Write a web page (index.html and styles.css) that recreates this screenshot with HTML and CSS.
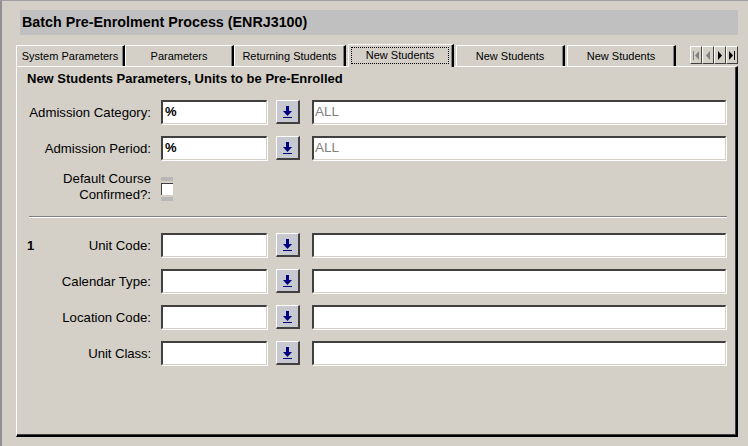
FILE: index.html
```html
<!DOCTYPE html>
<html>
<head>
<meta charset="utf-8">
<link rel="stylesheet" href="styles.css">
</head>
<body>
<div class="window">
  <div class="titlebar">Batch Pre-Enrolment Process (ENRJ3100)</div>
  <div class="tabs">
    <div class="tab w108">System Parameters</div>
    <div class="tab w109">Parameters</div>
    <div class="tab w111">Returning Students</div>
    <div class="tab active"><span class="focus">New Students</span></div>
    <div class="tab w108 ml">New Students</div>
    <div class="tab w109 ml">New Students</div>
    <div class="nav">
      <div class="navbtn"><svg width="8" height="9" viewBox="0 0 8 9"><rect x="1" y="0" width="1" height="9" fill="#808080"/><path d="M7 0 L3 4.5 L7 9 Z" fill="#808080"/></svg></div>
      <div class="navbtn"><svg width="8" height="9" viewBox="0 0 8 9"><path d="M6 0 L2 4.5 L6 9 Z" fill="#808080"/></svg></div>
      <div class="navbtn"><svg width="8" height="9" viewBox="0 0 8 9"><path d="M2 0 L6 4.5 L2 9 Z" fill="#000"/></svg></div>
      <div class="navbtn"><svg width="8" height="9" viewBox="0 0 8 9"><path d="M1 0 L5 4.5 L1 9 Z" fill="#000"/><rect x="6" y="0" width="1" height="9" fill="#000"/></svg></div>
    </div>
  </div>
  <div class="panel">
    <div class="heading">New Students Parameters, Units to be Pre-Enrolled</div>
    <div class="rows top">
      <div class="row">
        <div class="num"></div>
        <div class="label">Admission Category:</div>
        <div class="input code">%</div>
        <div class="lov"><svg width="11" height="14" viewBox="0 0 11 14"><rect x="4" y="1" width="3" height="5" fill="#000080"/><path d="M1 6 L10 6 L5.5 11 Z" fill="#000080"/><rect x="1" y="12" width="9" height="1" fill="#000080"/></svg></div>
        <div class="input desc">ALL</div>
      </div>
      <div class="row">
        <div class="num"></div>
        <div class="label">Admission Period:</div>
        <div class="input code">%</div>
        <div class="lov"><svg width="11" height="14" viewBox="0 0 11 14"><rect x="4" y="1" width="3" height="5" fill="#000080"/><path d="M1 6 L10 6 L5.5 11 Z" fill="#000080"/><rect x="1" y="12" width="9" height="1" fill="#000080"/></svg></div>
        <div class="input desc">ALL</div>
      </div>
      <div class="row chkrow">
        <div class="num"></div>
        <div class="label two">Default Course<br>Confirmed?:</div>
        <div class="chkwrap"><div class="bar"></div><div class="chk"></div><div class="bar"></div></div>
      </div>
    </div>
    <div class="divider"></div>
    <div class="rows">
      <div class="row">
        <div class="num">1</div>
        <div class="label">Unit Code:</div>
        <div class="input code"></div>
        <div class="lov"><svg width="11" height="14" viewBox="0 0 11 14"><rect x="4" y="1" width="3" height="5" fill="#000080"/><path d="M1 6 L10 6 L5.5 11 Z" fill="#000080"/><rect x="1" y="12" width="9" height="1" fill="#000080"/></svg></div>
        <div class="input desc"></div>
      </div>
      <div class="row">
        <div class="num"></div>
        <div class="label">Calendar Type:</div>
        <div class="input code"></div>
        <div class="lov"><svg width="11" height="14" viewBox="0 0 11 14"><rect x="4" y="1" width="3" height="5" fill="#000080"/><path d="M1 6 L10 6 L5.5 11 Z" fill="#000080"/><rect x="1" y="12" width="9" height="1" fill="#000080"/></svg></div>
        <div class="input desc"></div>
      </div>
      <div class="row">
        <div class="num"></div>
        <div class="label">Location Code:</div>
        <div class="input code"></div>
        <div class="lov"><svg width="11" height="14" viewBox="0 0 11 14"><rect x="4" y="1" width="3" height="5" fill="#000080"/><path d="M1 6 L10 6 L5.5 11 Z" fill="#000080"/><rect x="1" y="12" width="9" height="1" fill="#000080"/></svg></div>
        <div class="input desc"></div>
      </div>
      <div class="row">
        <div class="num"></div>
        <div class="label narrow">Unit Class:</div>
        <div class="input code"></div>
        <div class="lov"><svg width="11" height="14" viewBox="0 0 11 14"><rect x="4" y="1" width="3" height="5" fill="#000080"/><path d="M1 6 L10 6 L5.5 11 Z" fill="#000080"/><rect x="1" y="12" width="9" height="1" fill="#000080"/></svg></div>
        <div class="input desc"></div>
      </div>
    </div>
  </div>
</div>
</body>
</html>
```

FILE: styles.css
```css
html, body {
  margin: 0;
  padding: 0;
  background: #d4d0c8;
  font-family: "Liberation Sans", Arial, sans-serif;
  color: #000;
}
.window {
  width: 746px;
  height: 445px;
  border-top: 1px solid #a0a0a0;
  border-left: 2px solid #909090;
  box-sizing: content-box;
  position: relative;
}
.titlebar {
  margin: 9px 0 0 18px;
  width: 718px;
  height: 25px;
  background: #c0c0c0;
  font-weight: bold;
  font-size: 14.3px;
  line-height: 25px;
  padding-left: 2px;
  box-sizing: border-box;
}
.tabs {
  display: flex;
  align-items: flex-end;
  margin: 8px 0 0 14px;
  height: 23px;
}
.tab {
  height: 21px;
  box-sizing: border-box;
  border-top: 1px solid #ffffff;
  border-left: 1px solid #ffffff;
  border-right: 2px solid #000;
  box-shadow: inset -1px 0 0 #808080;
  font-size: 11px;
  line-height: 20px;
  text-align: center;
  white-space: nowrap;
  background: #d4d0c8;
}
.w108 { width: 109px; }
.w109 { width: 109px; }
.w111 { width: 112px; }
.ml { margin-left: 2px; }
.tab.active {
  width: 106px;
  height: 23px;
  margin-left: 2px;
  margin-bottom: -1px;
  position: relative;
  z-index: 2;
  padding: 2px 3px 0 2px;
  line-height: 16px;
}
.focus {
  display: block;
  border: 1px dotted #000;
  height: 15px;
  line-height: 15px;
}
.nav {
  display: flex;
  margin-left: 14px;
  margin-bottom: 2px;
}
.navbtn {
  width: 12px;
  height: 18px;
  box-sizing: border-box;
  border-top: 1px solid #fff;
  border-left: 1px solid #fff;
  border-right: 1px solid #404040;
  border-bottom: 1px solid #404040;
  display: flex;
  align-items: center;
  justify-content: center;
  background: #d4d0c8;
}
.panel {
  margin-left: 14px;
  width: 722px;
  height: 371px;
  box-sizing: border-box;
  border-left: 1px solid #ffffff;
  border-top: 1px solid #ffffff;
  border-right: 2px solid #000;
  border-bottom: 2px solid #000;
  box-shadow: inset -1px -1px 0 #404040;
  padding: 2px 0 0 10px;
}
.heading {
  font-weight: bold;
  font-size: 13px;
  line-height: 16px;
  margin-top: 2px;
}
.rows {
  display: flex;
  flex-direction: column;
  gap: 12px;
}
.rows.top {
  margin-top: 13px;
}
.row {
  display: grid;
  grid-template-columns: 20px 104px 116px 33px 426px;
  height: 24px;
  align-items: center;
}
.num {
  font-weight: bold;
  font-size: 13px;
}
.label {
  font-size: 13.2px;
  text-align: right;
  white-space: nowrap;
  justify-self: end;
}
.label.narrow {
  letter-spacing: -0.1px;
}
.label.two {
  line-height: 16px;
}
.input {
  height: 24px;
  box-sizing: border-box;
  background: #fff;
  border-top: 2px solid #404040;
  border-left: 2px solid #404040;
  border-right: 1px solid #d4d0c8;
  border-bottom: 1px solid #d4d0c8;
  box-shadow: inset -1px -1px 0 #ffffff, 1px 1px 0 #ffffff;
  font-size: 13px;
  line-height: 19px;
  padding-left: 2px;
}
.input.code {
  margin-left: 10px;
  width: 106px;
  font-weight: bold;
}
.lov {
  margin-left: 9px;
  width: 24px;
  height: 24px;
  box-sizing: border-box;
  background: #c8c8d0;
  border-top: 1px solid #ffffff;
  border-left: 1px solid #ffffff;
  border-right: 2px solid #404040;
  border-bottom: 2px solid #404040;
  display: flex;
  align-items: center;
  justify-content: center;
  padding-top: 1px;
}
.input.desc {
  margin-left: 12px;
  width: 414px;
  color: #808080;
  font-size: 13.5px;
  padding-left: 1px;
}
.chkrow {
  height: 36px;
  margin-top: -3px;
}
.chkwrap {
  margin-left: 10px;
  width: 12px;
  display: flex;
  flex-direction: column;
  gap: 2px;
  margin-top: 3px;
}
.bar {
  width: 12px;
  height: 4px;
  background: #b8b8b8;
}
.chk {
  width: 12px;
  height: 12px;
  box-sizing: border-box;
  background: #fff;
  border-top: 1px solid #404040;
  border-left: 1px solid #404040;
}
.divider {
  margin: 11px 0 15px 2px;
  width: 698px;
  height: 1px;
  background: #808080;
  border-bottom: 1px solid #ffffff;
}
```
